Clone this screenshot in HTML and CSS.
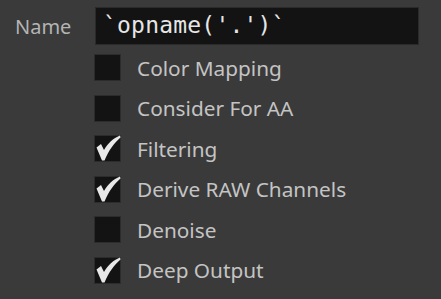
FILE: index.html
```html
<!DOCTYPE html>
<html>
<head><meta charset="utf-8"><link rel="stylesheet" href="styles.css"></head>
<body>
<div class="panel">
  <div class="name-row">
    <span class="label">Name</span>
    <div class="field">`opname('.')`</div>
  </div>
  <div class="toggles">
    <div class="toggle"><span class="box"></span><span class="text">Color Mapping</span></div>
    <div class="toggle"><span class="box"></span><span class="text">Consider For AA</span></div>
    <div class="toggle"><span class="box"><svg viewBox="0 0 27 27" class="check"><path d="M2.5 12.5 L7 9 L10 15 C14 8 19 3.5 26 0.5 L26.5 2.5 C20 8 15 15 10.5 25.5 L8 25.5 Z"/></svg></span><span class="text">Filtering</span></div>
    <div class="toggle"><span class="box"><svg viewBox="0 0 27 27" class="check"><path d="M2.5 12.5 L7 9 L10 15 C14 8 19 3.5 26 0.5 L26.5 2.5 C20 8 15 15 10.5 25.5 L8 25.5 Z"/></svg></span><span class="text">Derive RAW Channels</span></div>
    <div class="toggle"><span class="box"></span><span class="text">Denoise</span></div>
    <div class="toggle"><span class="box"><svg viewBox="0 0 27 27" class="check"><path d="M2.5 12.5 L7 9 L10 15 C14 8 19 3.5 26 0.5 L26.5 2.5 C20 8 15 15 10.5 25.5 L8 25.5 Z"/></svg></span><span class="text">Deep Output</span></div>
  </div>
</div>
</body>
</html>
```
FILE: styles.css
```css
html, body { margin: 0; padding: 0; background: #3a3a3a; }
body { width: 441px; height: 299px; overflow: hidden; font-family: "Noto Sans", sans-serif; }
.panel { padding-top: 7px; }
.name-row { display: flex; align-items: center; height: 38px; }
.label { width: 95px; padding-left: 15px; box-sizing: border-box; color: #b4b4b4; font-size: 20px; }
.field { width: 324px; height: 38px; box-sizing: border-box; border: 1px solid #2a2a2a; background: #131313; color: #e6e6e6; font-family: "DejaVu Sans Mono", monospace; font-size: 23px; line-height: 34px; padding-left: 7px; letter-spacing: 0.2px; }
.toggles { display: flex; flex-direction: column; padding-left: 94px; padding-top: 9px; gap: 13.5px; }
.toggle { display: flex; align-items: center; height: 27px; }
.box { width: 27px; height: 27px; box-sizing: border-box; border: 1px solid #2c2c2c; background: #131313; display: block; position: relative; }
.check { width: 27px; height: 27px; position: absolute; left: -1px; top: -1px; fill: #e8e8e8; overflow: visible; }
.text { margin-left: 16px; color: #c4c4c4; font-size: 20.8px; }
```
